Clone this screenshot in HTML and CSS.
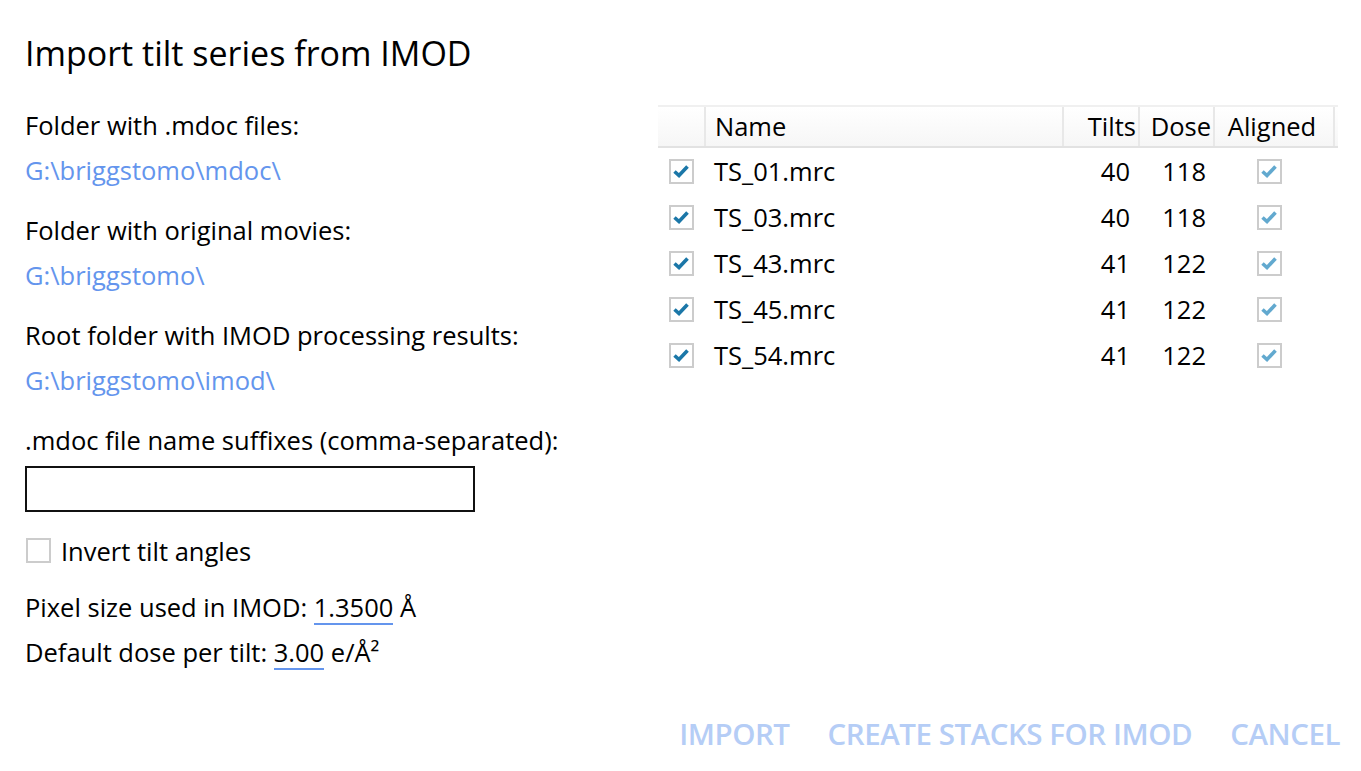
FILE: index.html
```html
<!DOCTYPE html>
<html>
<head>
<meta charset="utf-8">
<link rel="stylesheet" href="styles.css">
</head>
<body>
<div class="page">
  <div class="main">
    <div class="left">
      <div class="title">Import tilt series from IMOD</div>
      <div class="group">
        <div class="line">Folder with .mdoc files:</div>
        <div class="line path">G:\briggstomo\mdoc\</div>
      </div>
      <div class="group">
        <div class="line">Folder with original movies:</div>
        <div class="line path">G:\briggstomo\</div>
      </div>
      <div class="group">
        <div class="line">Root folder with IMOD processing results:</div>
        <div class="line path">G:\briggstomo\imod\</div>
      </div>
      <div class="line">.mdoc file name suffixes (comma-separated):</div>
      <div class="input"></div>
      <div class="check-row">
        <span class="box"></span>
        <span>Invert tilt angles</span>
      </div>
      <div class="line">Pixel size used in IMOD: <span class="val">1.3500</span> Å</div>
      <div class="line">Default dose per tilt: <span class="val">3.00</span> e/Å²</div>
    </div>
    <div class="right">
      <div class="table">
        <div class="row head">
          <div class="c c0"></div>
          <div class="c c1">Name</div>
          <div class="c c2">Tilts</div>
          <div class="c c3">Dose</div>
          <div class="c c4">Aligned</div>
          <div class="c c5"></div>
        </div>
        <div class="row">
          <div class="c c0"><span class="box on"><svg viewBox="0 0 21 21"><path d="M3.5 10.5 L8 14.5 L16.5 5.5"/></svg></span></div>
          <div class="c c1">TS_01.mrc</div>
          <div class="c c2">40</div>
          <div class="c c3">118</div>
          <div class="c c4"><span class="box dis"><svg viewBox="0 0 21 21"><path d="M3.5 10.5 L8 14.5 L16.5 5.5"/></svg></span></div>
          <div class="c c5"></div>
        </div>
        <div class="row">
          <div class="c c0"><span class="box on"><svg viewBox="0 0 21 21"><path d="M3.5 10.5 L8 14.5 L16.5 5.5"/></svg></span></div>
          <div class="c c1">TS_03.mrc</div>
          <div class="c c2">40</div>
          <div class="c c3">118</div>
          <div class="c c4"><span class="box dis"><svg viewBox="0 0 21 21"><path d="M3.5 10.5 L8 14.5 L16.5 5.5"/></svg></span></div>
          <div class="c c5"></div>
        </div>
        <div class="row">
          <div class="c c0"><span class="box on"><svg viewBox="0 0 21 21"><path d="M3.5 10.5 L8 14.5 L16.5 5.5"/></svg></span></div>
          <div class="c c1">TS_43.mrc</div>
          <div class="c c2">41</div>
          <div class="c c3">122</div>
          <div class="c c4"><span class="box dis"><svg viewBox="0 0 21 21"><path d="M3.5 10.5 L8 14.5 L16.5 5.5"/></svg></span></div>
          <div class="c c5"></div>
        </div>
        <div class="row">
          <div class="c c0"><span class="box on"><svg viewBox="0 0 21 21"><path d="M3.5 10.5 L8 14.5 L16.5 5.5"/></svg></span></div>
          <div class="c c1">TS_45.mrc</div>
          <div class="c c2">41</div>
          <div class="c c3">122</div>
          <div class="c c4"><span class="box dis"><svg viewBox="0 0 21 21"><path d="M3.5 10.5 L8 14.5 L16.5 5.5"/></svg></span></div>
          <div class="c c5"></div>
        </div>
        <div class="row">
          <div class="c c0"><span class="box on"><svg viewBox="0 0 21 21"><path d="M3.5 10.5 L8 14.5 L16.5 5.5"/></svg></span></div>
          <div class="c c1">TS_54.mrc</div>
          <div class="c c2">41</div>
          <div class="c c3">122</div>
          <div class="c c4"><span class="box dis"><svg viewBox="0 0 21 21"><path d="M3.5 10.5 L8 14.5 L16.5 5.5"/></svg></span></div>
          <div class="c c5"></div>
        </div>
      </div>
    </div>
  </div>
  <div class="footer">
    <span class="btn">IMPORT</span>
    <span class="btn">CREATE STACKS FOR IMOD</span>
    <span class="btn">CANCEL</span>
  </div>
</div>
</body>
</html>
```

FILE: styles.css
```css
html, body {
  margin: 0;
  padding: 0;
  background: #fff;
}
body {
  font-family: "Open Sans", "Noto Sans", sans-serif;
  font-size: 25.5px;
  color: #000;
}
.page {
  height: 771px;
  display: flex;
  flex-direction: column;
  overflow: hidden;
}
.main {
  flex: 1;
  display: flex;
}
.left {
  width: 658px;
  padding-left: 25px;
  box-sizing: border-box;
  display: flex;
  flex-direction: column;
  padding-top: 30px;
}
.title {
  font-size: 34px;
  line-height: 46px;
  margin-bottom: 27px;
  white-space: nowrap;
}
.line {
  line-height: 45px;
  height: 45px;
  white-space: nowrap;
}
.group {
  margin-bottom: 15px;
}
.path {
  color: #6495ed;
}
.input {
  margin-top: 3px;
  width: 450px;
  height: 46px;
  box-sizing: border-box;
  border: 2px solid #111;
}
.check-row {
  display: flex;
  align-items: center;
  gap: 10px;
  margin-top: 26px;
  margin-bottom: 22px;
  height: 25px;
  padding-left: 1px;
  white-space: nowrap;
}
.box {
  display: inline-block;
  width: 25px;
  height: 25px;
  box-sizing: border-box;
  border: 2px solid #cccccc;
  background: #fff;
  flex: none;
}
.box svg {
  display: block;
  width: 21px;
  height: 21px;
}
.box svg path {
  fill: none;
  stroke-width: 3.6;
  stroke-linecap: butt;
  stroke-linejoin: miter;
}
.box.on svg path { stroke: #1b77a8; }
.box.dis svg path { stroke: #62a9cf; }
.val {
  display: inline-block;
  line-height: 31px;
  border-bottom: 2px solid #6495ed;
}
.right {
  padding-top: 105px;
}
.table {
  width: 680px;
  border-top: 2px solid #f0f0f0;
}
.row {
  display: grid;
  grid-template-columns: 46px 358px 76px 75px 120px 5px;
  height: 46px;
  align-items: center;
}
.row.head {
  height: 39px;
  background: linear-gradient(#ffffff, #f6f6f6);
  border-bottom: 2px solid #e2e2e2;
  align-items: stretch;
}
.head .c {
  border-left: 2px solid #e8e8e8;
  display: flex;
  align-items: center;
  line-height: 39px;
}
.head .c0 { border-left: none; }
.head .c1 { padding-left: 9px; }
.head .c2 { justify-content: flex-end; padding-right: 2px; }
.head .c3 { justify-content: flex-end; padding-right: 2px; }
.head .c4 { justify-content: center; padding-right: 4px; }
.c {
  white-space: nowrap;
  box-sizing: border-box;
}
.c0 { padding-left: 11px; display: flex; }
.c1 { padding-left: 10px; }
.c2 { text-align: right; padding-right: 8px; }
.c3 { text-align: right; padding-right: 7px; }
.c4 { display: flex; justify-content: center; padding-right: 8px; }
.footer {
  display: flex;
  justify-content: flex-end;
  gap: 38px;
  padding-right: 21px;
  padding-bottom: 17px;
  height: 40px;
  align-items: center;
}
.btn {
  color: #b5cdf6;
  font-size: 29.5px;
  font-weight: 600;
  line-height: 40px;
  white-space: nowrap;
  letter-spacing: -0.45px;
}
```
